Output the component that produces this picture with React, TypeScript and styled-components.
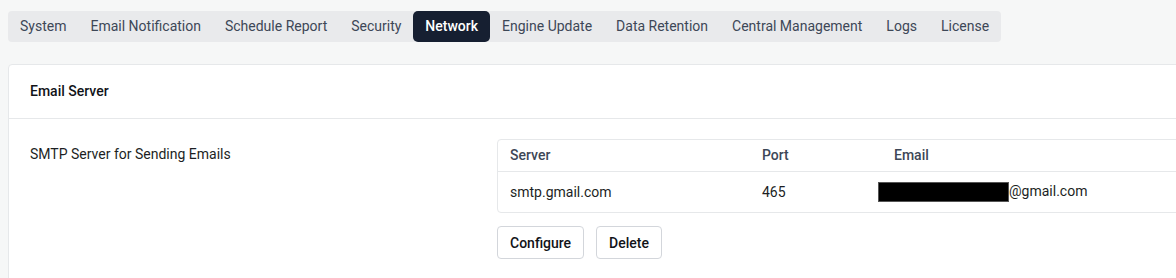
import styled, { createGlobalStyle } from 'styled-components';

const GlobalStyle = createGlobalStyle`
  html, body {
    margin: 0;
    padding: 0;
    background: #f6f7f7;
    font-family: Roboto, 'Liberation Sans', Arial, sans-serif;
    overflow: hidden;
  }
`;

const tabs = [
  'System',
  'Email Notification',
  'Schedule Report',
  'Security',
  'Network',
  'Engine Update',
  'Data Retention',
  'Central Management',
  'Logs',
  'License',
];

const App = () => {
  return (
    <>
      <GlobalStyle />
      <Page>
        <TabBar>
          {tabs.map((t) => (
            <Tab key={t} $active={t === 'Network'}>
              {t}
            </Tab>
          ))}
        </TabBar>

        <Card>
          <CardHeader>Email Server</CardHeader>
          <CardBody>
            <Label>SMTP Server for Sending Emails</Label>
            <div>
              <Table>
                <thead>
                  <tr>
                    <Th $width={252}>Server</Th>
                    <Th $width={132}>Port</Th>
                    <Th>Email</Th>
                  </tr>
                </thead>
                <tbody>
                  <tr>
                    <Td>smtp.gmail.com</Td>
                    <Td>465</Td>
                    <Td>
                      <Redacted />
                      @gmail.com
                    </Td>
                  </tr>
                </tbody>
              </Table>
              <Actions>
                <Button>Configure</Button>
                <Button>Delete</Button>
              </Actions>
            </div>
          </CardBody>
        </Card>
      </Page>
    </>
  );
};

const Page = styled.div`
  padding: 11px 0 0 8px;
  width: 1460px;
`;

const TabBar = styled.nav`
  display: inline-flex;
  height: 31px;
  background: #e9eaec;
  border-radius: 4px;
`;

const Tab = styled.div<{ $active?: boolean }>`
  display: flex;
  align-items: center;
  padding: 0 12px 1px;
  font-size: 14px;
  font-weight: ${(p) => (p.$active ? 500 : 400)};
  color: ${(p) => (p.$active ? '#ffffff' : '#3d4757')};
  background: ${(p) => (p.$active ? '#161f31' : 'transparent')};
  border-radius: 5px;
  white-space: nowrap;
`;

const Card = styled.section`
  margin-top: 22px;
  width: 1445px;
  height: 260px;
  background: #ffffff;
  border: 1px solid #e6e8ea;
  border-radius: 4px;
  box-sizing: border-box;
`;

const CardHeader = styled.div`
  height: 52px;
  display: flex;
  align-items: center;
  padding: 0 21px 1px;
  font-size: 14px;
  font-weight: 500;
  color: #111318;
  border-bottom: 1px solid #e6e8ea;
`;

const CardBody = styled.div`
  display: grid;
  grid-template-columns: 467px 1fr;
  padding: 20px 21px;
`;

const Label = styled.div`
  padding-top: 7px;
  font-size: 14px;
  line-height: 16px;
  color: #1c1f24;
`;

const Table = styled.table`
  width: 100%;
  border-collapse: separate;
  border-spacing: 0;
  border: 1px solid #e6e8ea;
  border-radius: 4px;
`;

const Th = styled.th<{ $width?: number }>`
  width: ${(p) => (p.$width ? `${p.$width}px` : 'auto')};
  height: 32px;
  padding: 0 12px 1px;
  text-align: left;
  font-size: 14px;
  font-weight: 500;
  color: #3d4757;
  border-bottom: 1px solid #e6e8ea;
  box-sizing: border-box;
`;

const Td = styled.td`
  height: 40px;
  padding: 0 12px;
  font-size: 14px;
  color: #1c1f24;
  white-space: nowrap;
`;

const Redacted = styled.span`
  display: inline-block;
  vertical-align: middle;
  width: 131px;
  height: 20px;
  margin-left: -16px;
  background: #000000;
  border: 1px solid #555;
  box-sizing: border-box;
`;

const Actions = styled.div`
  display: flex;
  gap: 12px;
  margin-top: 13px;
`;

const Button = styled.button`
  height: 33px;
  padding: 0 12px;
  background: #ffffff;
  border: 1px solid #d3d6db;
  border-radius: 4px;
  font-family: inherit;
  font-size: 14px;
  font-weight: 500;
  color: #111318;
`;

export default App;
